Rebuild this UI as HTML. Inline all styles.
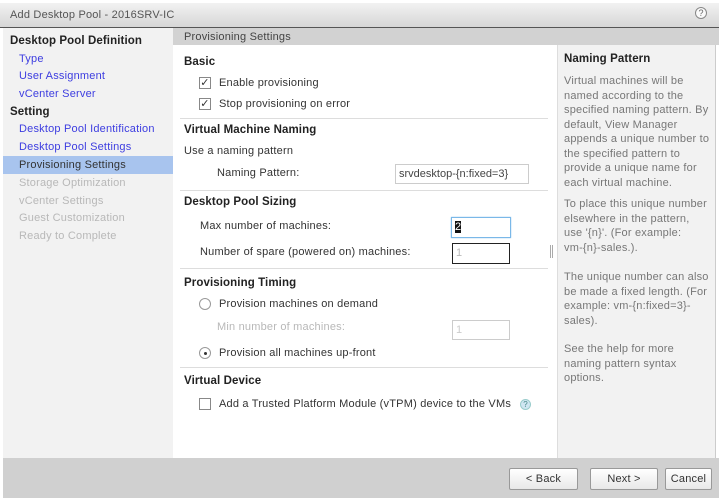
<!DOCTYPE html>
<html><head><style>
*{margin:0;padding:0;box-sizing:border-box}
body{width:719px;height:499px;background:#fff;font-family:"Liberation Sans",sans-serif;font-size:11px;letter-spacing:0.2px;color:#333;position:relative;overflow:hidden}
.a{position:absolute;white-space:nowrap;line-height:13px}
.b{font-weight:bold;font-size:11.5px;color:#222;letter-spacing:0.1px}
.l{color:#3d3de0}
.g{color:#b8b8b8}
.cb{position:absolute;width:12px;height:12px;border:1px solid #888;background:#fff;font-size:11px;line-height:10px;text-align:center;color:#333}
.rd{position:absolute;width:12px;height:12px;border:1px solid #999;border-radius:50%;background:#fff}
.sep{position:absolute;left:180px;width:368px;height:1px;background:#ddd}
.in{position:absolute;border:1px solid #aaa;background:#fff;font-size:11px;line-height:18px;padding-left:3px}
.btn{position:absolute;top:468px;height:22px;border:1px solid #999;border-radius:2px;background:linear-gradient(#fff,#e8e8e8);text-align:center;line-height:20px;font-size:11px;color:#333}
.p{position:absolute;left:564px;width:155px;line-height:14.5px;color:#777;white-space:nowrap}
</style></head><body>
<div style="position:absolute;left:0;top:3px;width:719px;height:25px;background:linear-gradient(#f2f2f2,#d6d6d6);border-bottom:1px solid #555"></div>
<div class="a" style="left:10px;top:9px;color:#555">Add Desktop Pool - 2016SRV-IC</div>
<div style="position:absolute;left:695px;top:7px;width:12px;height:12px;border:1px solid #888;border-radius:50%;font-size:9px;text-align:center;line-height:10px;color:#666;background:#fafafa;letter-spacing:0">?</div>

<div style="position:absolute;left:3px;top:28px;width:170px;height:430px;background:#f2f2f2"></div>
<div style="position:absolute;left:3px;top:156px;width:170px;height:18px;background:#a8c4ee"></div>
<div class="a b" style="left:10px;top:35px">Desktop Pool Definition</div>
<div class="a l" style="left:19px;top:53px">Type</div>
<div class="a l" style="left:19px;top:70px">User Assignment</div>
<div class="a l" style="left:19px;top:88px">vCenter Server</div>
<div class="a b" style="left:10px;top:106px">Setting</div>
<div class="a l" style="left:19px;top:123px">Desktop Pool Identification</div>
<div class="a l" style="left:19px;top:141px">Desktop Pool Settings</div>
<div class="a" style="left:19px;top:159px;color:#333">Provisioning Settings</div>
<div class="a g" style="left:19px;top:177px">Storage Optimization</div>
<div class="a g" style="left:19px;top:195px">vCenter Settings</div>
<div class="a g" style="left:19px;top:212px">Guest Customization</div>
<div class="a g" style="left:19px;top:230px">Ready to Complete</div>

<div style="position:absolute;left:173px;top:28px;width:546px;height:17px;background:#d2d2d2"></div>
<div class="a" style="left:184px;top:31px;color:#444">Provisioning Settings</div>

<div style="position:absolute;left:557px;top:45px;width:159px;height:413px;background:#f2f2f2;border-left:1px solid #ddd;border-right:1px solid #ccc"></div>
<div class="a b" style="left:564px;top:53px">Naming Pattern</div>
<div class="p" style="top:74px">Virtual machines will be<br>named according to the<br>specified naming pattern. By<br>default, View Manager<br>appends a unique number to<br>the specified pattern to<br>provide a unique name for<br>each virtual machine.</div>
<div class="p" style="top:197px">To place this unique number<br>elsewhere in the pattern,<br>use '{n}'. (For example:<br>vm-{n}-sales.).</div>
<div class="p" style="top:270px">The unique number can also<br>be made a fixed length. (For<br>example: vm-{n:fixed=3}-<br>sales).</div>
<div class="p" style="top:342px">See the help for more<br>naming pattern syntax<br>options.</div>

<div class="a b" style="left:184px;top:56px">Basic</div>
<div class="cb" style="left:199px;top:77px">✓</div><div class="a" style="left:219px;top:77px">Enable provisioning</div>
<div class="cb" style="left:199px;top:98px">✓</div><div class="a" style="left:219px;top:98px">Stop provisioning on error</div>
<div class="sep" style="top:118px"></div>
<div class="a b" style="left:184px;top:124px">Virtual Machine Naming</div>
<div class="a" style="left:184px;top:145px">Use a naming pattern</div>
<div class="a" style="left:217px;top:167px">Naming Pattern:</div>
<div class="in" style="left:395px;top:164px;width:134px;height:20px;border-color:#ccc;color:#444;letter-spacing:0">srvdesktop-{n:fixed=3}</div>
<div class="sep" style="top:190px"></div>
<div class="a b" style="left:184px;top:196px">Desktop Pool Sizing</div>
<div class="a" style="left:200px;top:220px">Max number of machines:</div>
<div class="in" style="left:451px;top:217px;width:60px;height:21px;border:1px solid #7ab8e8;box-shadow:0 0 1px #7ab8e8"><span style="background:#111;color:#fff">2</span></div>
<div class="a" style="left:200px;top:246px">Number of spare (powered on) machines:</div>
<div class="in" style="left:452px;top:243px;width:58px;height:21px;border:1px solid #222;color:#bbb">1</div>
<div style="position:absolute;left:550px;top:245px;width:3px;height:13px;border-left:1px solid #aaa;border-right:1px solid #aaa"></div>
<div class="sep" style="top:268px"></div>
<div class="a b" style="left:184px;top:277px">Provisioning Timing</div>
<div class="rd" style="left:199px;top:298px"></div><div class="a" style="left:219px;top:298px">Provision machines on demand</div>
<div class="a g" style="left:217px;top:321px">Min number of machines:</div>
<div class="in" style="left:452px;top:320px;width:58px;height:20px;border-color:#ccc;color:#ccc">1</div>
<div class="rd" style="left:199px;top:347px"><div style="position:absolute;left:4px;top:4px;width:3px;height:3px;border-radius:50%;background:#333"></div></div><div class="a" style="left:219px;top:347px">Provision all machines up-front</div>
<div class="sep" style="top:367px"></div>
<div class="a b" style="left:184px;top:375px">Virtual Device</div>
<div class="cb" style="left:199px;top:398px"></div><div class="a" style="left:219px;top:398px">Add a Trusted Platform Module (vTPM) device to the VMs</div>
<div style="position:absolute;left:520px;top:399px;width:11px;height:11px;border-radius:50%;background:#cfe6f2;border:1px solid #9cc;font-size:8px;text-align:center;line-height:9px;color:#488;letter-spacing:0">?</div>

<div style="position:absolute;left:3px;top:458px;width:716px;height:40px;background:#d0d0d0"></div>
<div class="btn" style="left:509px;width:69px">&lt; Back</div>
<div class="btn" style="left:590px;width:68px">Next &gt;</div>
<div class="btn" style="left:665px;width:47px">Cancel</div>
</body></html>
